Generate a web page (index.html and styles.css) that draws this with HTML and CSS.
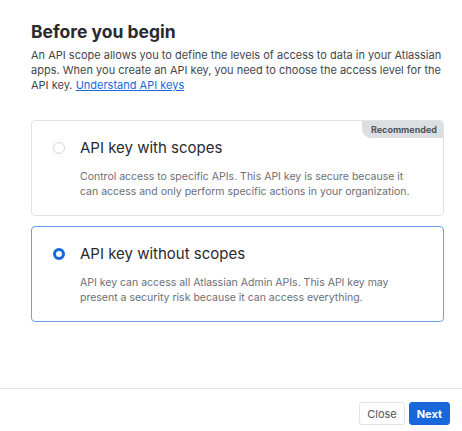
FILE: index.html
```html
<!DOCTYPE html>
<html lang="en">

<head>
    <meta charset="UTF-8">
    <meta name="viewport" content="width=device-width, initial-scale=1.0">
    <title>Before you begin</title>
    <link rel="stylesheet" href="styles.css">
</head>

<body>
    <div class="modal">
        <div class="modal-body">
            <h1 class="modal-title">Before you begin</h1>
            <p class="intro">
                An API scope allows you to define the levels of access to data in your Atlassian
                apps. When you create an API key, you need to choose the access level for the
                API key. <a href="#" class="link">Understand API keys</a>
            </p>

            <div class="options">
                <label class="option-card">
                    <span class="badge">Recommended</span>
                    <span class="option-head">
                        <span class="radio"></span>
                        <span class="option-title">API key with scopes</span>
                    </span>
                    <span class="option-desc">Control access to specific APIs. This API key is secure because it
                        can access and only perform specific actions in your organization.</span>
                </label>

                <label class="option-card selected">
                    <span class="option-head">
                        <span class="radio checked"></span>
                        <span class="option-title">API key without scopes</span>
                    </span>
                    <span class="option-desc">API key can access all Atlassian Admin APIs. This API key may
                        present a security risk because it can access everything.</span>
                </label>
            </div>
        </div>

        <div class="modal-footer">
            <button class="btn btn-subtle">Close</button>
            <button class="btn btn-primary">Next</button>
        </div>
    </div>
</body>

</html>
```

FILE: styles.css
```css
* {
    box-sizing: border-box;
}

body {
    margin: 0;
    padding: 0;
    font-family: Inter, "Noto Sans", sans-serif;
    color: #292a2e;
    background: #fff;
}

.modal {
    display: flex;
    flex-direction: column;
    height: 431px;
}

.modal-body {
    flex: 1;
    padding: 20px 18px 0 31px;
}

.modal-title {
    margin: 0;
    font-size: 17.5px;
    line-height: 24px;
    font-weight: 700;
    color: #292a2e;
}

.intro {
    margin: 4px 0 0;
    font-size: 11px;
    line-height: 15px;
    color: #44464c;
}

.link {
    display: inline-block;
    line-height: 14px;
    color: #1868db;
}

.options {
    display: flex;
    flex-direction: column;
    gap: 10px;
    margin-top: 27px;
}

.option-card {
    position: relative;
    display: flex;
    flex-direction: column;
    height: 96px;
    padding: 16px 20px 0 21px;
    border: 1px solid #e1e2e5;
    border-radius: 4px;
}

.option-card.selected {
    border-color: #6a9ff0;
}

.badge {
    position: absolute;
    top: 0;
    right: 0;
    padding: 2px 6px 2px 9px;
    font-size: 9px;
    line-height: 13px;
    font-weight: 700;
    color: #505258;
    background: #dddee1;
    border-radius: 0 3px 0 9px;
}

.option-head {
    display: flex;
    align-items: center;
    gap: 15px;
    height: 22px;
}

.radio {
    width: 12px;
    height: 12px;
    border: 1px solid #d3d5d9;
    border-radius: 50%;
}

.radio.checked {
    border: 3.5px solid #1868db;
}

.option-title {
    font-size: 15px;
    line-height: 22px;
    color: #292a2e;
}

.option-desc {
    margin: 10px 0 0 27px;
    font-size: 10.5px;
    line-height: 15px;
    color: #6b6e76;
}

.modal-footer {
    display: flex;
    justify-content: flex-end;
    gap: 4px;
    height: 43px;
    padding: 13px 12px 0 0;
    border-top: 1px solid #e4e5e7;
}

.btn {
    height: 23px;
    padding: 0 7px;
    font-family: inherit;
    font-size: 11px;
    border-radius: 3px;
    cursor: pointer;
}

.btn-subtle {
    color: #505258;
    background: #fff;
    border: 1px solid #e1e2e5;
}

.btn-primary {
    color: #fff;
    font-weight: 700;
    background: #1868db;
    border: 1px solid #1868db;
}
```
